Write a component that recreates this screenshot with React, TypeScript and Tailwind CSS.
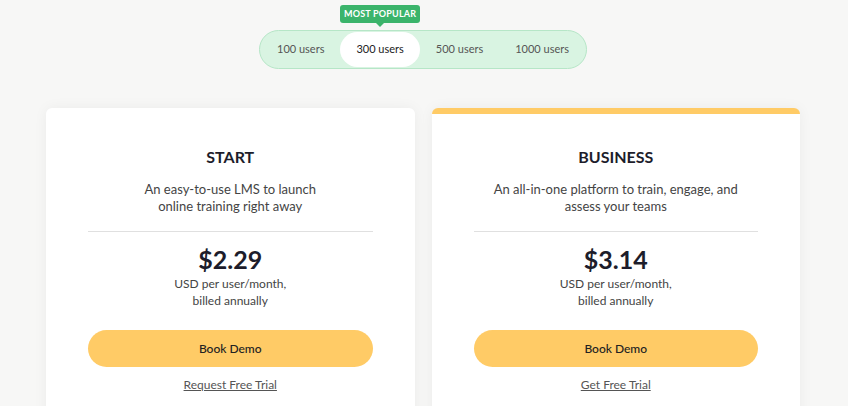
import { useState } from "react"

interface Plan {
  name: string
  desc: string[]
  price: string
  link: string
  featured?: boolean
}

const plans: Plan[] = [
  {
    name: "START",
    desc: ["An easy-to-use LMS to launch", "online training right away"],
    price: "$2.29",
    link: "Request Free Trial",
  },
  {
    name: "BUSINESS",
    desc: ["An all-in-one platform to train, engage, and", "assess your teams"],
    price: "$3.14",
    link: "Get Free Trial",
    featured: true,
  },
]

const tiers = ["100 users", "300 users", "500 users", "1000 users"]

export default function App() {
  const [active, setActive] = useState(1)

  return (
    <div className="min-h-screen bg-[#f7f7f6] flex flex-col items-center pt-[30px] font-['Lato',sans-serif] text-[#1d1d2b]">
      <div className="flex p-px mr-[2px] rounded-full bg-[#d9f4e2] border border-[#b6e6c7]">
        {tiers.map((t, i) => (
          <button
            key={t}
            onClick={() => setActive(i)}
            className={
              "relative h-[35px] px-[16px] rounded-full text-[11px] " +
              (i === active ? "bg-white text-[#222]" : "text-[#555]")
            }
          >
            {i === 1 && (
              <span className="absolute left-1/2 -translate-x-1/2 top-[-27px] flex flex-col items-center">
                <span className="h-[18px] w-[80px] flex items-center justify-center rounded-[3px] bg-[#3bb46b] text-white text-[9px] font-bold tracking-[0.2px]">
                  MOST POPULAR
                </span>
                <span className="w-0 h-0 border-l-[4px] border-r-[4px] border-t-[4px] border-l-transparent border-r-transparent border-t-[#3bb46b]" />
              </span>
            )}
            {t}
          </button>
        ))}
      </div>

      <div className="grid grid-cols-2 gap-[17px] w-[754px] mr-[2px] mt-[39px]">
        {plans.map((p) => (
          <div
            key={p.name}
            className={
              "bg-white rounded-[6px] shadow-[0_0_14px_rgba(0,0,0,0.05)] px-[42px] pb-[60px] flex flex-col items-center " +
              (p.featured ? "border-t-[6px] border-[#ffcb66] pt-[31px]" : "pt-[37px]")
            }
          >
            <h2 className="text-[16px] leading-[24px] font-bold">{p.name}</h2>
            <p className="mt-[12px] text-[13px] leading-[17px] text-[#444] text-center">
              {p.desc[0]}
              <br />
              {p.desc[1]}
            </p>
            <div className="w-full h-px bg-[#e0e0e0] mt-[16px]" />
            <div className="mt-[12px] text-[25px] leading-[30px] font-bold">{p.price}</div>
            <p className="mt-px text-[12px] leading-[17px] text-[#444] text-center">
              USD per user/month,
              <br />
              billed annually
            </p>
            <button className="mt-[21px] w-full h-[37px] rounded-full bg-[#ffcb66] text-[12px] font-medium text-[#222]">
              Book Demo
            </button>
            <a href="#" className="mt-[10px] text-[12px] leading-[16px] text-[#555] underline">
              {p.link}
            </a>
          </div>
        ))}
      </div>
    </div>
  )
}
